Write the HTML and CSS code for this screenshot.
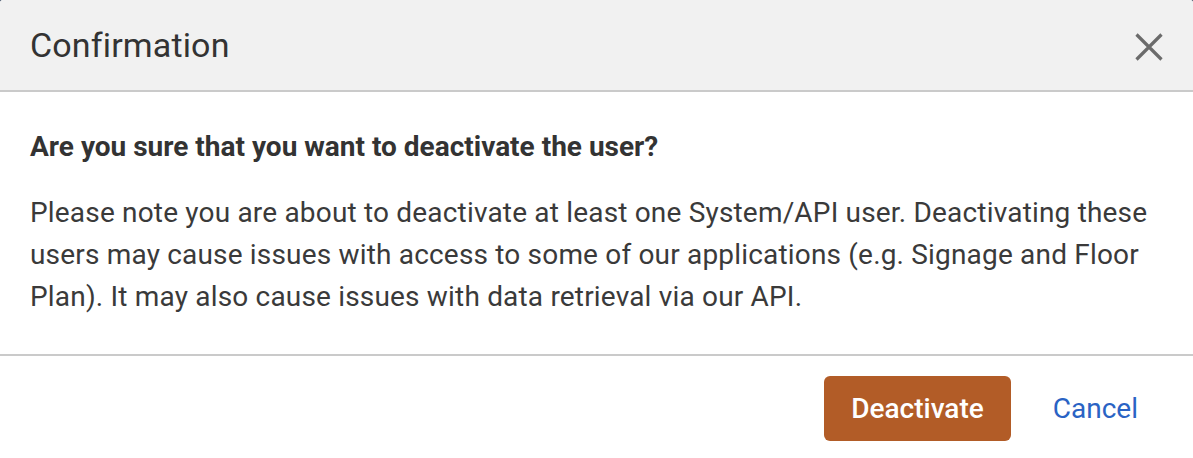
FILE: index.html
```html
<!DOCTYPE html>
<html lang="en">
<head>
<meta charset="utf-8">
<title>Confirmation</title>
<link rel="stylesheet" href="styles.css">
</head>
<body>
<div class="dialog">
  <div class="dialog-header">
    <h1 class="dialog-title">Confirmation</h1>
    <button class="close-btn" aria-label="Close">
      <svg width="28" height="28" viewBox="0 0 28 28"><path d="M1.5 1.5 L26.5 26.5 M26.5 1.5 L1.5 26.5" stroke="#6b6b6b" stroke-width="3.2" fill="none"/></svg>
    </button>
  </div>
  <div class="dialog-body">
    <p class="question">Are you sure that you want to deactivate the user?</p>
    <p class="note">Please note you are about to deactivate at least one System/API user. Deactivating these users may cause issues with access to some of our applications (e.g. Signage and Floor Plan). It may also cause issues with data retrieval via our API.</p>
  </div>
  <div class="dialog-footer">
    <button class="btn-primary">Deactivate</button>
    <button class="btn-link">Cancel</button>
  </div>
</div>
</body>
</html>
```
FILE: styles.css
```css
html, body {
  margin: 0;
  padding: 0;
  background: #46546a;
  height: 100%;
  overflow: hidden;
}
body {
  font-family: Roboto, "Liberation Sans", Arial, sans-serif;
}
.dialog {
  background: #fff;
  width: 1193px;
  height: 470px;
  border-radius: 3px;
  overflow: hidden;
}
.dialog-header {
  height: 90px;
  background: #f1f1f1;
  border-bottom: 2px solid #cacaca;
  display: flex;
  align-items: center;
  justify-content: space-between;
  padding: 0 30px;
}
.dialog-title {
  margin: 0;
  font-size: 34px;
  font-weight: 400;
  color: #333;
  line-height: 1.2;
  letter-spacing: 0.15px;
}
.close-btn {
  background: none;
  border: 0;
  padding: 0;
  width: 28px;
  height: 28px;
  margin-top: 4px;
  cursor: pointer;
  display: flex;
}
.dialog-body {
  padding: 34px 30px 36px;
  color: #3a3a3a;
  border-bottom: 2px solid #cacaca;
}
.question {
  margin: 0 0 24px;
  font-size: 28px;
  font-weight: 700;
  line-height: 42px;
  color: #333;
}
.note {
  margin: 0;
  font-size: 28px;
  line-height: 42px;
  letter-spacing: 0.18px;
}
.dialog-footer {
  display: flex;
  justify-content: flex-end;
  align-items: center;
  padding: 20px 55px 20px 30px;
}
.btn-primary {
  height: 65px;
  padding: 0 27px;
  background: #b25c27;
  color: #fff;
  border: 0;
  border-radius: 6px;
  font-family: inherit;
  font-size: 28px;
  font-weight: 500;
}
.btn-link {
  margin-left: 42px;
  background: none;
  border: 0;
  padding: 0;
  color: #2a63c4;
  font-family: inherit;
  font-size: 28px;
  font-weight: 400;
}
```
